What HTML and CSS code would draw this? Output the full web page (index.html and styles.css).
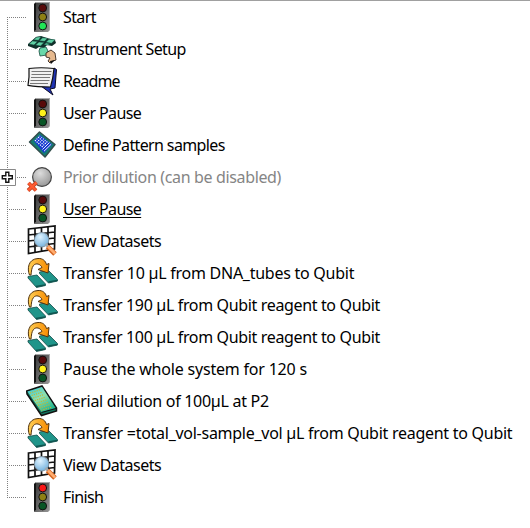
FILE: index.html
```
<!DOCTYPE html>
<html lang="en">
<head>
<meta charset="utf-8">
<title>Method steps</title>
<link rel="stylesheet" href="styles.css">
</head>
<body>
<svg class="defs" aria-hidden="true">
  <defs>
    <linearGradient id="metal" x2="1" y2="1"><stop offset="0" stop-color="#333"/><stop offset=".5" stop-color="#666"/><stop offset="1" stop-color="#999"/></linearGradient>
    <linearGradient id="gold" x2="1"><stop offset="0" stop-color="#ffcf55"/><stop offset="1" stop-color="#f78a00"/></linearGradient>
    <radialGradient id="ball" cx=".4" cy=".3" r=".7"><stop offset="0" stop-color="#ddd"/><stop offset="1" stop-color="#999"/></radialGradient>
    <radialGradient id="glass" cx=".4" cy=".3" r=".7"><stop offset="0" stop-color="#e0f3ff"/><stop offset="1" stop-color="#77b4df"/></radialGradient>
    <linearGradient id="assay" x2=".7" y2="1"><stop offset="0" stop-color="#35c9d9"/><stop offset=".5" stop-color="#8fe0b0"/><stop offset="1" stop-color="#20b38e"/></linearGradient>
    <symbol id="signal" viewBox="0 0 32 32">
      <path fill="url(#metal)" d="M8 3l2-2h14v28l-2 2H8z"/>
      <path fill="#141414" d="M8 3l2-1v27l-2 1z"/><path fill="#a8a8a8" d="M10 1h14v28h-1V2H10z"/>
      <g stroke="#111" stroke-width="1"><circle class="red" cx="16.700" cy="7" r="3.900"/><circle class="yellow" cx="16.700" cy="16" r="3.900"/><circle class="green" cx="16.700" cy="25" r="3.900"/></g>
    </symbol>
    <symbol id="instrument" viewBox="0 0 32 32">
      <path fill="#102e29" d="M10 4l5-1 6 2 8 2 1 3-4 3-5-1-3 3-5-1-3 2-8-3v-2z"/>
      <g fill="#5fd0a4" stroke="#174d40" stroke-width=".5"><path d="M10.500 4.300l4.500-.5-2.500 3.500-5-.5zM16.500 4.800l5 .5-3 3-5-.5zM23 6.300l6 .5-3.500 3.500-5.500-1zM6.500 8l5 .5L8 12l-5-1zM13 9l5 .5-3.500 3.500-5-1zM20 10l4 .8-2 1.200-4-.2z"/></g>
      <path fill="#68d7a9" stroke="#174d40" stroke-width=".8" d="M14 15l6-1 2 4-1 4-7 1-1-5z"/>
      <path fill="#e6b98e" stroke="#34261e" stroke-width=".9" d="M20 20l5-3 4 3 1 7-3 1-3 2-2-2 2-3-4-1z"/><path fill="#111" d="M24 28l5-1-4 4z"/>
    </symbol>
    <symbol id="readme" viewBox="0 0 32 32">
      <path fill="#2034b5" stroke="#080824" stroke-width="1" d="M28 3l2.500 1.500L29 23l-5 1 3 6-12-9z"/>
      <path fill="#f0f0f0" stroke="#111" stroke-width="1.200" d="M3 3.500Q15 2 28 3.500Q27 14 24.500 22Q11 22 2 20.300Q3.500 12 3 3.500z"/>
      <path stroke="#777" fill="none" d="M5.500 6.500h20M5.500 9.500h19.500M5 12.500h19M4.500 15.500h19M4 18.500h18"/>
    </symbol>
    <symbol id="define" viewBox="0 0 32 32">
      <path fill="#157c72" stroke="#344e4c" stroke-width="1.500" stroke-linejoin="round" d="M13.500 3L29 15.500 19 28 3.500 13z"/>
      <path fill="#173bd0" d="M8 12l6-6 12 9.500-8 8.500z"/>
      <path stroke="#fff" stroke-width="1.200" stroke-dasharray="1.200 1" d="M9 12l5-5M10.700 13.500l5.200-5.200M12.400 15l5.300-5.300M14.100 16.500l5.400-5.400M15.800 18l5.500-5.500"/>
      <path stroke="#fff" stroke-width=".9" d="M16.500 20.500l7-7M18 22.200l7.200-7"/>
    </symbol>
    <symbol id="prior" viewBox="0 0 32 32">
      <circle cx="16" cy="16" r="9.400" fill="url(#ball)" stroke="#444" stroke-width="1.200"/>
      <path stroke="#c54321" stroke-width="3.800" d="M2.500 22l7.500 7.500M10.500 21.500L2 29.500"/><path stroke="#ff5b32" stroke-width="2.400" d="M2.500 22l7.500 7.500M10.500 21.500L2 29.500"/>
    </symbol>
    <symbol id="view" viewBox="0 0 32 32">
      <path fill="#fff" stroke="#111" stroke-width="1.700" d="M2.500 4L29 1l-.5 23-26 4.500zM9 3v24M15.500 2.500v24M22 2v23M2.500 10l26-3M2.500 16l26-3M2.500 22l26-3.500"/>
      <circle cx="15.600" cy="14.800" r="7.200" fill="url(#glass)" stroke="#8094a3"/>
      <path stroke="#9fa9b0" stroke-width="3" d="M19.500 19l3 3"/><path stroke="#d56420" stroke-width="5" d="M21.500 21.500l7.500 7.500"/><path stroke="#ffad70" stroke-width="2.500" d="M22 21.500l7 7"/>
    </symbol>
    <symbol id="transfer" viewBox="0 0 32 32">
      <path fill="#20958a" stroke="#134b48" stroke-width=".8" d="M2 19.500l9-1.500 8.500 9v1.500l-9 2L2 21zM13.500 15l9-1.500 9 9V24l-9 2-9-9.500z"/>
      <path stroke="#105651" d="M10 29.500l9-1.500M22.500 25l8.500-1.500" stroke-width="1.400"/>
      <path fill="url(#gold)" stroke="#513311" stroke-width="1" stroke-linejoin="round" d="M3.500 18C1 12 2 2 12 1.500c5-.3 7.500 2.500 8.500 6L23 6.500l-1 9.500-10-3.500 4-2C14.500 7 10 5.500 7.500 8.500 5.500 11 5.500 14 5 18z"/>
    </symbol>
    <symbol id="serial" viewBox="0 0 32 32">
      <path fill="#13745c" stroke="#111" stroke-width="1.500" d="M.7 6L16 1l14.500 22v3L15.500 30.500 1 9z"/>
      <path fill="url(#assay)" d="M1.500 6.500L16 2l13.500 21-14 4z"/>
      <path stroke="#c9b52c" stroke-width="1.100" stroke-dasharray="1.200 1.100" d="M4 8l11-3.500M5.600 10.500l11-3.500M7.200 13l11-3.500M8.800 15.500l11-3.500M10.400 18l11-3.500M12 20.500l11-3.500M13.600 23l11-3.500M15.200 25.300l11-3.300"/>
      <path stroke="#111" stroke-width="1" d="M15.500 27.500l14.500-4"/>
    </symbol>
  </defs>
</svg>
<ul class="tree">
  <li><i class="branch"></i><svg class="go"><use href="#signal"/></svg><span class="t-start">Start</span></li>
  <li><i class="branch"></i><svg><use href="#instrument"/></svg><span class="t-instrument">Instrument Setup</span></li>
  <li><i class="branch"></i><svg><use href="#readme"/></svg><span class="t-readme">Readme</span></li>
  <li><i class="branch"></i><svg class="wait"><use href="#signal"/></svg><span class="t-user">User Pause</span></li>
  <li><i class="branch"></i><svg><use href="#define"/></svg><span class="t-define">Define Pattern samples</span></li>
  <li class="disabled"><i class="branch"></i><svg class="expander" viewBox="0 0 16 17"><path fill="#fff" stroke="#888" d="M-.5.5h16v16h-16z"/><path fill="#fff" stroke="#111" stroke-width="1.400" d="M5.800 3.200h3v3.500h3.500v3H8.800v3.500h-3V9.700H2.300v-3h3.500z"/></svg><svg><use href="#prior"/></svg><span class="t-prior">Prior dilution (can be disabled)</span></li>
  <li class="current"><i class="branch"></i><svg class="wait"><use href="#signal"/></svg><span class="t-user">User Pause</span></li>
  <li><i class="branch"></i><svg><use href="#view"/></svg><span class="t-view">View Datasets</span></li>
  <li><i class="branch"></i><svg><use href="#transfer"/></svg><span class="t-ten">Transfer 10 µL from DNA_tubes to Qubit</span></li>
  <li><i class="branch"></i><svg><use href="#transfer"/></svg><span class="t-reagent">Transfer 190 µL from Qubit reagent to Qubit</span></li>
  <li><i class="branch"></i><svg><use href="#transfer"/></svg><span class="t-reagent">Transfer 100 µL from Qubit reagent to Qubit</span></li>
  <li><i class="branch"></i><svg class="wait"><use href="#signal"/></svg><span class="t-pause">Pause the whole system for 120 s</span></li>
  <li><i class="branch"></i><svg><use href="#serial"/></svg><span class="t-serial">Serial dilution of 100µL at P2</span></li>
  <li><i class="branch"></i><svg><use href="#transfer"/></svg><span class="t-total">Transfer =total_vol-sample_vol µL from Qubit reagent to Qubit</span></li>
  <li><i class="branch"></i><svg><use href="#view"/></svg><span class="t-view">View Datasets</span></li>
  <li><i class="branch"></i><svg class="stop"><use href="#signal"/></svg><span class="t-finish">Finish</span></li>
</ul>
</body>
</html>
```
FILE: styles.css
```
* { box-sizing: border-box; }
body { margin: 0; background: #fff; color: #000; font: 16px/20px "Noto Sans", sans-serif; }
.defs { position: absolute; width: 0; height: 0; }
.tree { height: 528px; margin: 0; padding: 0; list-style: none; border-top: 1px solid #a0a0a0; overflow: hidden; }
.tree li { position: relative; display: flex; align-items: center; height: 32px; padding-left: 7px; white-space: nowrap; }
.tree li::before { content: ""; position: absolute; left: 7px; top: 0; bottom: 0; width: 1px; background: repeating-linear-gradient(#808080 0 1px, transparent 1px 2px); }
.tree li:first-child::before { top: 16px; }
.tree li:last-child::before { bottom: 15px; }
.branch { width: 19px; height: 1px; background: repeating-linear-gradient(90deg, #808080 0 1px, transparent 1px 2px); }
svg { width: 32px; height: 32px; flex: none; fill: none; --red: #580a0a; --yellow: #8e8014; --green: #075525; }
.red { fill: var(--red); }
.yellow { fill: var(--yellow); }
.green { fill: var(--green); }
.go { --green: #20e557; }
.wait { --yellow: #fff21b; }
.stop { --red: #fa1717; }
span { margin-left: 5px; }
.t-start { letter-spacing: -.6px; }
.t-instrument { letter-spacing: -.6px; }
.t-readme { letter-spacing: -.85px; }
.t-user { letter-spacing: -.62px; }
.t-define { letter-spacing: -.63px; }
.t-prior { letter-spacing: -.35px; }
.t-view { letter-spacing: -.5px; }
.t-ten { letter-spacing: -.26px; }
.t-reagent { letter-spacing: -.35px; }
.t-pause { letter-spacing: -.2px; }
.t-serial { letter-spacing: -.29px; }
.t-total { letter-spacing: -.27px; }
.t-finish { letter-spacing: -.6px; }
.disabled { color: #858585; }
.current span { text-decoration: underline; text-underline-offset: 2px; text-decoration-thickness: 1px; }
.expander { position: absolute; left: 0; top: 8px; width: 16px; height: 17px; }
```
